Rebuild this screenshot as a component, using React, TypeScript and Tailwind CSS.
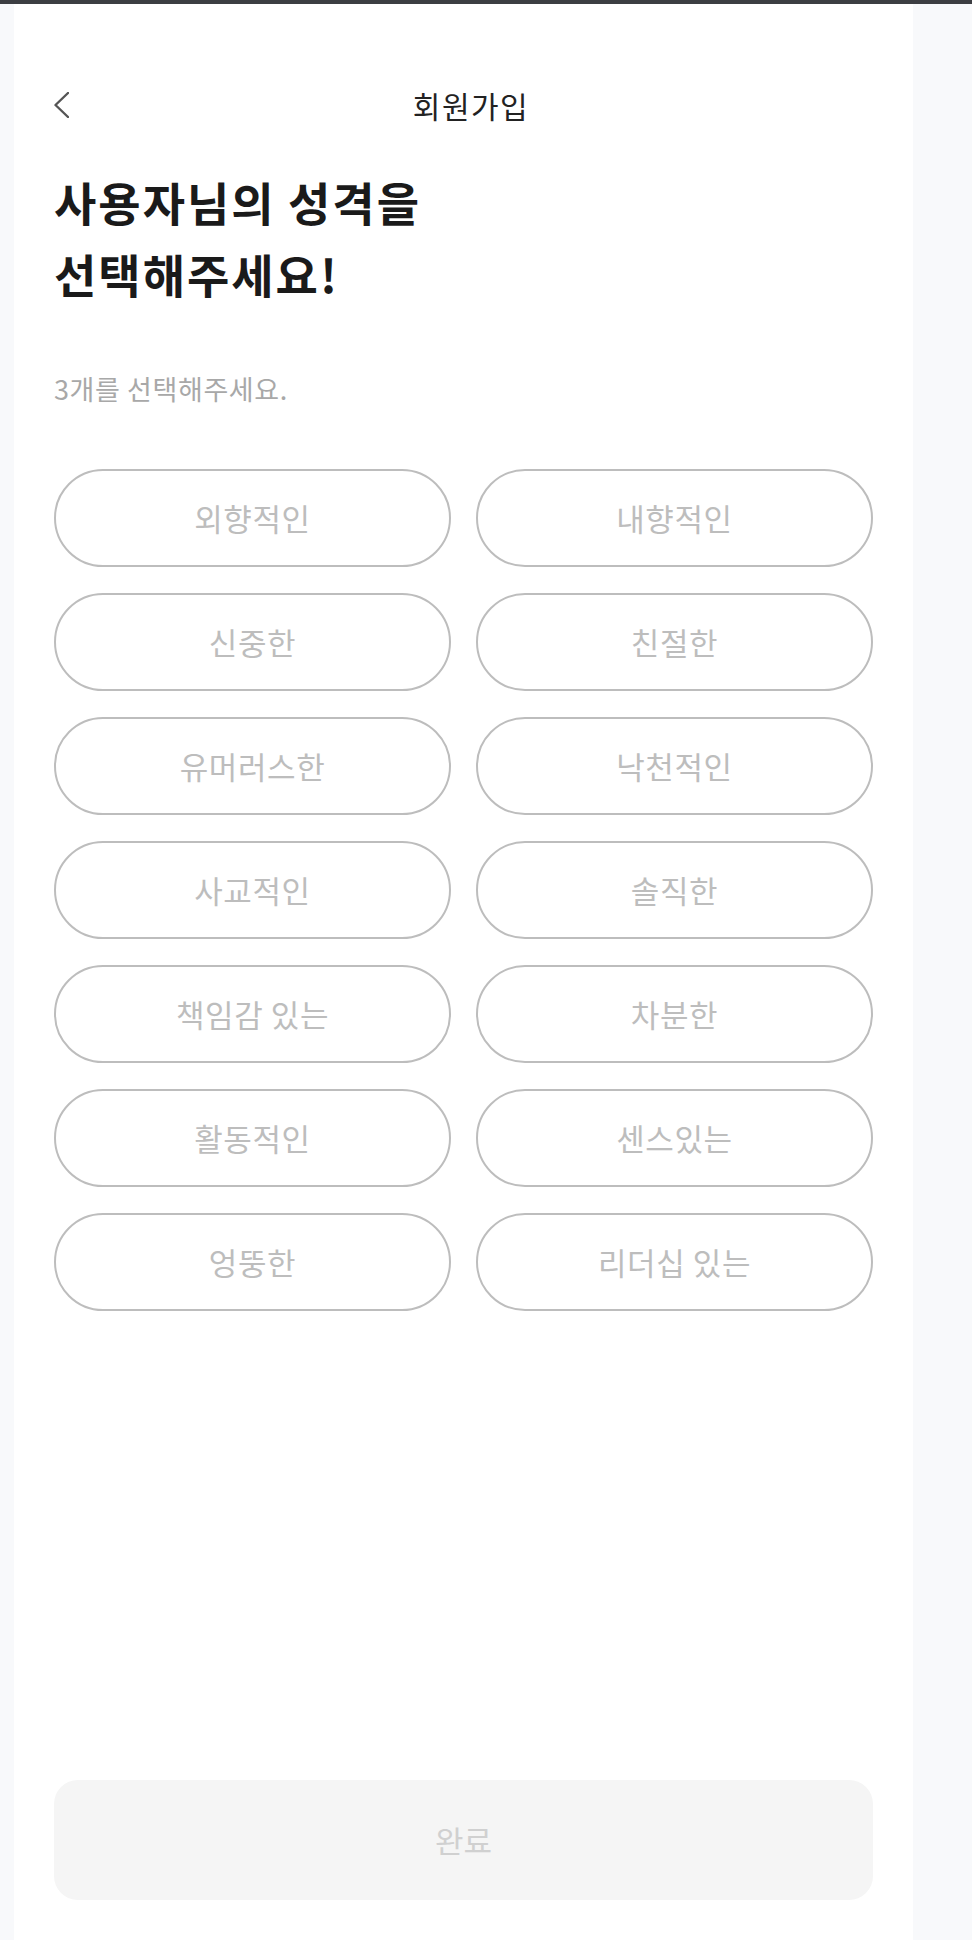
const traits = [
  "외향적인",
  "내향적인",
  "신중한",
  "친절한",
  "유머러스한",
  "낙천적인",
  "사교적인",
  "솔직한",
  "책임감 있는",
  "차분한",
  "활동적인",
  "센스있는",
  "엉뚱한",
  "리더십 있는",
]

const font = "font-['Noto_Sans_CJK_KR','Noto_Sans',sans-serif]"

export default function App() {
  return (
    <div className={`min-h-[1940px] bg-[#f8f9fb] ${font}`}>
      <div className="h-1 bg-[#3c3e42]" />
      <div className="flex">
        <div className="w-[14px] shrink-0" />
        <main className="flex h-[1936px] w-[899px] shrink-0 flex-col bg-white px-10 pt-[73px] pb-10">
          <header className="flex h-14 items-center">
            <button className="flex h-[26px] w-[15px] items-center" aria-label="뒤로가기">
              <svg width="15" height="26" viewBox="0 0 15 26" fill="none">
                <polyline
                  points="14,1 1.5,13 14,25"
                  stroke="#555"
                  strokeWidth="2.4"
                  strokeLinecap="round"
                  strokeLinejoin="round"
                />
              </svg>
            </button>
            <h1 className="flex-1 text-center text-[30px] tracking-[1.5px] text-[#222]">회원가입</h1>
          </header>

          <h2 className="mt-8 text-[46px] leading-[72px] font-bold tracking-[2px] text-[#1a1a1a]">
            사용자님의 성격을
            <br />
            선택해주세요!
          </h2>

          <p className="mt-[62px] text-[27px] leading-9 tracking-[0.6px] text-[#a8a8a8]">3개를 선택해주세요.</p>

          <div className="mt-[62px] grid grid-cols-2 gap-x-[25px] gap-y-[26px]">
            {traits.map((trait) => (
              <button
                key={trait}
                className="flex h-[98px] items-center justify-center rounded-full border-2 border-[#bdbdbd] bg-white text-[31px] tracking-[0.6px] text-[#bdbdbd]"
              >
                {trait}
              </button>
            ))}
          </div>

          <button
            disabled
            className="mt-auto flex h-[120px] items-center justify-center rounded-3xl bg-[#f5f5f5] text-[31px] text-[#d0d0d0]"
          >
            완료
          </button>
        </main>
      </div>
    </div>
  )
}
